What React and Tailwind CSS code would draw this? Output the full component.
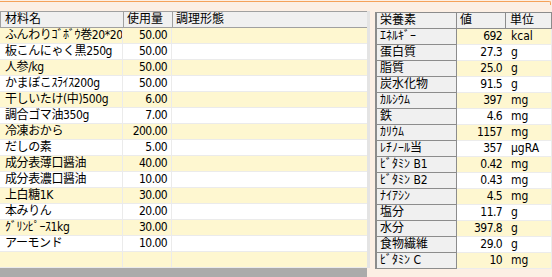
const ingredients = [
  ['ふんわりｺﾞﾎﾞｳ巻20*20', '50.00'],
  ['板こんにゃく黒250g', '50.00'],
  ['人参/kg', '50.00'],
  ['かまぼこｽﾗｲｽ200g', '50.00'],
  ['干しいたけ(中)500g', '6.00'],
  ['調合ゴマ油350g', '7.00'],
  ['冷凍おから', '200.00'],
  ['だしの素', '5.00'],
  ['成分表薄口醤油', '40.00'],
  ['成分表濃口醤油', '10.00'],
  ['上白糖1K', '30.00'],
  ['本みりん', '20.00'],
  ['ｸﾞﾘﾝﾋﾟｰｽ1kg', '30.00'],
  ['アーモンド', '10.00'],
  ['', ''],
];

const nutrients = [
  ['ｴﾈﾙｷﾞｰ', '692', 'kcal'],
  ['蛋白質', '27.3', 'g'],
  ['脂質', '25.0', 'g'],
  ['炭水化物', '91.5', 'g'],
  ['ｶﾙｼｳﾑ', '397', 'mg'],
  ['鉄', '4.6', 'mg'],
  ['ｶﾘｳﾑ', '1157', 'mg'],
  ['ﾚﾁﾉｰﾙ当', '357', 'μgRA'],
  ['ﾋﾞﾀﾐﾝ B1', '0.42', 'mg'],
  ['ﾋﾞﾀﾐﾝ B2', '0.43', 'mg'],
  ['ﾅｲｱｼﾝ', '4.5', 'mg'],
  ['塩分', '11.7', 'g'],
  ['水分', '397.8', 'g'],
  ['食物繊維', '29.0', 'g'],
  ['ﾋﾞﾀﾐﾝ C', '10', 'mg'],
];

function IngredientRow({ name, amount, odd }) {
  return (
    <div
      className={`grid grid-cols-[123px_49px_195px] h-4 border-b border-[#ebebeb] ${
        odd ? 'bg-white' : 'bg-[#fef7d0]'
      }`}
    >
      <div className="border-r border-[#ebebeb] pl-[5px] whitespace-nowrap overflow-hidden tracking-[-0.4px]">{name}</div>
      <div className="border-r border-[#ebebeb] pr-[4px] text-right tracking-[-0.6px]">{amount}</div>
      <div />
    </div>
  );
}

function NutrientRow({ label, value, unit, odd }) {
  const bg = odd ? 'bg-white' : 'bg-[#fef7d0]';
  return (
    <div className="grid grid-cols-[80px_49px_46px] h-4">
      <div className="bg-[#f0f0f0] border-r border-b border-[#8c8c8c] pl-[3px] whitespace-nowrap">{label}</div>
      <div className={`${bg} border-b border-[#ececec] pr-[4px] text-right tracking-[-0.6px]`}>{value}</div>
      <div className={`${bg} border-b border-r border-[#ececec] pl-[5px] whitespace-nowrap`}>{unit}</div>
    </div>
  );
}

export default function App() {
  return (
    <div
      className="w-[552px] h-[277px] bg-[#fcefe4] overflow-hidden text-[12px] leading-[15px] text-black"
      style={{ fontFamily: '"DejaVu Sans Condensed", "Noto Sans CJK JP", sans-serif' }}
    >
      <div className="h-px" />
      <div className="h-[4px] w-[551px] border-t border-r border-[#f5a25a] rounded-tr-[2px]" />

      <div className="flex mt-[6px]">
        {/* 材料 */}
        <div className="flex flex-col w-[370px]">
          <div className="flex">
            <div className="w-[367px]">
              <div className="grid grid-cols-[123px_49px_195px] h-[17px] bg-[#f0f0f0] border-t border-b border-l border-[#a0a0a0]">
                <div className="border-r border-[#a0a0a0] pl-[4px]">材料名</div>
                <div className="border-r border-[#a0a0a0] pl-[3px]">使用量</div>
                <div className="pl-[3px] border-r border-[#a0a0a0]">調理形態</div>
              </div>
              {ingredients.map((r, i) => (
                <IngredientRow key={i} name={r[0]} amount={r[1]} odd={i % 2 === 1} />
              ))}
            </div>
            <div className="w-[3px] bg-[#e4e4e4]" />
          </div>
          <div className="h-[12px] w-[367px] bg-[#ababab]" />
        </div>

        {/* 栄養素 */}
        <div className="ml-[5px] mt-px w-[177px]">
          <div className="border-l-2 border-t border-[#8c8c8c]">
            <div className="grid grid-cols-[80px_49px_46px] h-4 bg-[#f0f0f0]">
              <div className="border-r border-b border-[#8c8c8c] pl-[3px]">栄養素</div>
              <div className="border-r border-b border-[#8c8c8c] pl-[3px]">値</div>
              <div className="border-r border-b border-[#8c8c8c] pl-[4px]">単位</div>
            </div>
            {nutrients.map((r, i) => (
              <NutrientRow key={i} label={r[0]} value={r[1]} unit={r[2]} odd={i % 2 === 1} />
            ))}
          </div>
        </div>
      </div>
    </div>
  );
}
